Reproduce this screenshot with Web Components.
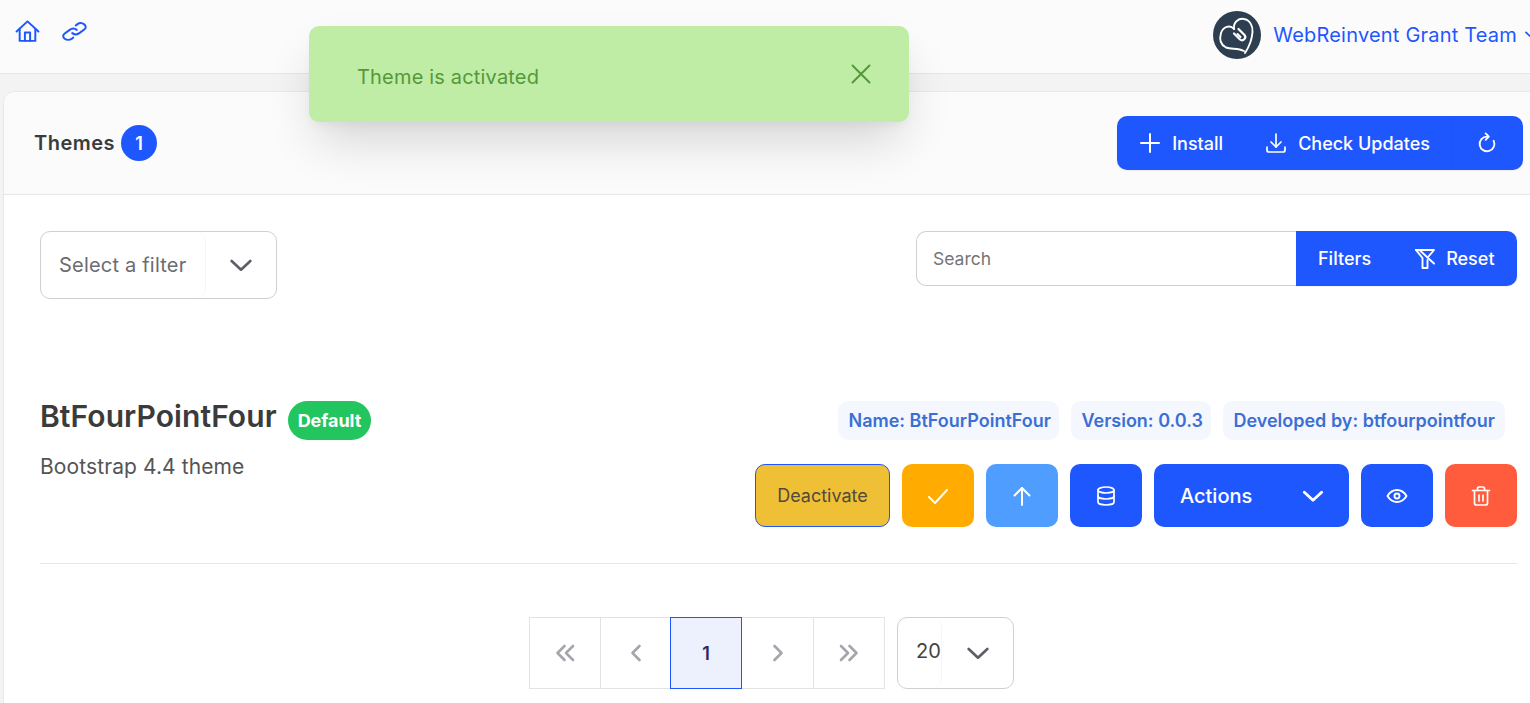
<!DOCTYPE html>
<html lang="en">
<head>
<meta charset="utf-8">
<title>Themes</title>
<style>
  html, body { margin: 0; height: 703px; overflow: hidden; background: #f3f3f3; }
  body { font-family: 'Inter', 'Liberation Sans', sans-serif; }
</style>
</head>
<body>
<app-shell>
  <top-bar slot="top" user="WebReinvent Grant Team"></top-bar>
  <toast-note slot="toast">Theme is activated</toast-note>
  <themes-card count="1">
    <filter-bar slot="filters"></filter-bar>
    <theme-row slot="rows" name="BtFourPointFour" description="Bootstrap 4.4 theme" version="0.0.3" developer="btfourpointfour"></theme-row>
    <page-nav slot="pager" current="1" per-page="20"></page-nav>
  </themes-card>
</app-shell>

<script>
const ICONS = {
  home: '<path d="M1.500 12L12 2.300 22.500 12"/><path d="M4.500 9.800V21h15V9.800"/><path d="M9.500 21v-8h5v8"/>',
  link: '<g transform="translate(12 12) scale(1.2 .88) translate(-12 -12)"><path vector-effect="non-scaling-stroke" d="M13.828 10.172a4 4 0 00-5.656 0l-4 4a4 4 0 105.656 5.656l1.102-1.101"/><path vector-effect="non-scaling-stroke" d="M10.172 13.828a4 4 0 005.656 0l4-4a4 4 0 00-5.656-5.656l-1.1 1.1"/></g>',
  plus: '<path d="M12 3v18M3 12h18"/>',
  download: '<path d="M3 16v3a2 2 0 0 0 2 2h14a2 2 0 0 0 2-2v-3"/><path d="M7 11l5 5 5-5"/><path d="M12 3v13"/>',
  refresh: '<path d="M12 5a8 8 0 1 0 7.200 4.500"/><path d="M10.500 1.500L14 5l-3.500 3.500"/>',
  filteroff: '<path d="M3 3h18l-5.500 6.500"/><path d="M3 3l6.500 8v10h5v-8"/><path d="M7 3.500l14 13"/>',
  chevron: '<path d="M4 8.500l8 7.500 8-7.500"/>',
  check: '<path d="M3 13l6 6L21 6"/>',
  up: '<path d="M12 21V4"/><path d="M4.500 11.500L12 4l7.500 7.500"/>',
  database: '<ellipse cx="12" cy="6" rx="8" ry="3"/><path d="M4 6v6c0 1.700 3.600 3 8 3s8-1.300 8-3V6"/><path d="M4 12v6c0 1.700 3.600 3 8 3s8-1.300 8-3v-6"/>',
  eye: '<circle cx="12" cy="12" r="2.500"/><path d="M21.500 12c-2.400 4-5.600 6-9.500 6s-7.100-2-9.500-6c2.400-4 5.600-6 9.500-6s7.100 2 9.500 6z"/>',
  trash: '<path d="M3.500 6.500h17"/><path d="M5.500 6.500V19a2 2 0 0 0 2 2h9a2 2 0 0 0 2-2V6.500"/><path d="M8.500 6.500V4.500a1.500 1.500 0 0 1 1.500-1.500h4a1.500 1.500 0 0 1 1.500 1.500v2"/><path d="M10 11v6M14 11v6"/>',
  close: '<path d="M3.500 3.500l17 17M20.500 3.500l-17 17"/>',
  first: '<path d="M11.500 5l-7 7 7 7M20 5l-7 7 7 7"/>',
  prev: '<path d="M15.500 5l-7 7 7 7"/>',
  next: '<path d="M8.500 5l7 7-7 7"/>',
  last: '<path d="M4 5l7 7-7 7M12.500 5l7 7-7 7"/>'
};

class UiIcon extends HTMLElement {
  constructor() {
    super();
    const size = this.getAttribute('size') || 24;
    const stroke = this.getAttribute('stroke') || 2;
    this.attachShadow({ mode: 'open' });
    this.shadowRoot.innerHTML = `
      <style>
        :host { display: inline-flex; flex: none; width: ${size}px; height: ${size}px; }
        svg { width: 100%; height: 100%; fill: none; stroke: currentColor; stroke-width: ${stroke}; stroke-linecap: round; stroke-linejoin: round; }
      </style>
      <svg viewBox="0 0 24 24">${ICONS[this.getAttribute('name')] || ''}</svg>`;
  }
}
customElements.define('ui-icon', UiIcon);

const shellTemplate = document.createElement('template');
shellTemplate.innerHTML = `
  <style>
    :host { display: block; position: relative; width: 1554px; }
    main { padding: 17px 0 0 3px; }
  </style>
  <slot name="top"></slot>
  <slot name="toast"></slot>
  <main><slot></slot></main>
`;
class AppShell extends HTMLElement {
  constructor() {
    super();
    this.attachShadow({ mode: 'open' });
    this.shadowRoot.appendChild(shellTemplate.content.cloneNode(true));
  }
}
customElements.define('app-shell', AppShell);

class TopBar extends HTMLElement {
  constructor() {
    super();
    this.attachShadow({ mode: 'open' });
    this.shadowRoot.innerHTML = `
      <style>
        :host { display: flex; align-items: flex-start; justify-content: space-between; box-sizing: border-box; height: 74px; background: #fbfbfb; border-bottom: 1px solid #e6e6e6; padding: 11px 13px 0 15px; color: #1f57ff; }
        nav { display: flex; gap: 22px; padding-top: 8px; }
        .user { display: flex; align-items: center; gap: 12px; height: 48px; font-size: 20px; line-height: 48px; letter-spacing: .2px; }
        .user span { display: block; }
        .user ui-icon { margin-left: -6px; }
        .avatar { width: 48px; height: 48px; flex: none; }
      </style>
      <nav>
        <ui-icon name="home" size="25" stroke="1.900"></ui-icon>
        <ui-icon name="link" size="25" stroke="2"></ui-icon>
      </nav>
      <div class="user">
        <svg class="avatar" viewBox="0 0 48 48" fill="none" stroke="#fff" stroke-linecap="round">
          <circle cx="24" cy="24" r="24" fill="#2c3e50" stroke="none"/>
          <path stroke-width="1.900" d="M21 18C17 13 10 16 8 22c-2 7 0 12 5 14.500 5 2 12 .5 18 3.500"/>
          <path stroke-width="1.900" d="M21 18c-1-7 5-11 10-10 6 1 9 7 8.500 13-.5 7-3.500 15-7.500 21"/>
          <path stroke-width="2.200" d="M21 22.500l6 6a3.200 3.200 0 0 0 4.500-4.500l-6-6"/>
          <path stroke-width="2" d="M24.500 23l3 3"/>
        </svg>
        <span>${this.getAttribute('user')}</span>
        <ui-icon name="chevron" size="18" stroke="2.400"></ui-icon>
      </div>`;
  }
}
customElements.define('top-bar', TopBar);

const toastTemplate = document.createElement('template');
toastTemplate.innerHTML = `
  <style>
    :host { position: absolute; left: 309px; top: 26px; width: 600px; height: 96px; box-sizing: border-box; display: flex; align-items: center; justify-content: space-between; padding: 6px 36px 0 48px; background: #c0eda6; color: #55983a; border-radius: 10px; font-size: 20px; letter-spacing: .18px; box-shadow: 0 25px 50px -8px rgba(0, 0, 0, .16), 0 6px 12px -4px rgba(0, 0, 0, .05); z-index: 5; }
    ui-icon { margin-bottom: 6px; }
  </style>
  <slot></slot>
  <ui-icon name="close" size="24" stroke="2"></ui-icon>
`;
class ToastNote extends HTMLElement {
  constructor() {
    super();
    this.attachShadow({ mode: 'open' });
    this.shadowRoot.appendChild(toastTemplate.content.cloneNode(true));
  }
}
customElements.define('toast-note', ToastNote);

class ThemesCard extends HTMLElement {
  constructor() {
    super();
    this.attachShadow({ mode: 'open' });
    this.shadowRoot.innerHTML = `
      <style>
        :host { display: block; background: #fff; border: 1px solid #e8e8e8; border-radius: 12px 12px 0 0; }
        header { display: flex; align-items: center; justify-content: space-between; height: 102px; padding: 0 30px; background: #fbfbfb; border-bottom: 1px solid #e6e6e6; border-radius: 12px 12px 0 0; }
        .title { display: flex; align-items: center; gap: 6px; font-size: 20px; font-weight: 600; color: #3b3b3b; letter-spacing: .5px; }
        .count { width: 36px; height: 36px; border-radius: 50%; background: #1f57ff; color: #fff; font-size: 18px; font-weight: 600; letter-spacing: 0; display: grid; place-items: center; }
        .group { display: flex; height: 54px; border-radius: 10px; overflow: hidden; background: #1f57ff; color: #fff; font-size: 18px; font-weight: 500; box-shadow: 0 1px 2px rgba(0,0,0,.06); }
        .group div { display: flex; align-items: center; gap: 10px; box-shadow: inset -1px 0 rgba(0,0,0,.015); }
        .install { padding: 0 20px 0 21px; }
        .updates { padding: 0 22px 0 21px; }
        .reload { padding: 0 25px 0 24px; }
        section { padding: 36px 36px 40px; }
      </style>
      <header>
        <div class="title"><span>Themes</span><span class="count">${this.getAttribute('count')}</span></div>
        <div class="group">
          <div class="install"><ui-icon name="plus" size="24"></ui-icon><span>Install</span></div>
          <div class="updates"><ui-icon name="download" size="24" stroke="1.700"></ui-icon><span>Check Updates</span></div>
          <div class="reload"><ui-icon name="refresh" size="22"></ui-icon></div>
        </div>
      </header>
      <section>
        <slot name="filters"></slot>
        <slot name="rows"></slot>
        <slot name="pager"></slot>
      </section>`;
  }
}
customElements.define('themes-card', ThemesCard);

class FilterBar extends HTMLElement {
  constructor() {
    super();
    this.attachShadow({ mode: 'open' });
    this.shadowRoot.innerHTML = `
      <style>
        :host { display: flex; justify-content: space-between; align-items: flex-start; }
        .select { display: flex; width: 237px; height: 68px; box-sizing: border-box; border: 1px solid #d0d0d0; border-radius: 10px; color: #6b6b72; font-size: 20px; letter-spacing: .2px; }
        .select .value { width: 165px; box-sizing: border-box; padding-left: 18px; display: flex; align-items: center; border-right: 1px solid #f5f5f5; border-radius: 0 10px 10px 0; }
        .select .arrow { flex: 1; display: grid; place-items: center; color: #5e5e68; }
        .search { display: flex; height: 55px; width: 601px; }
        .field { width: 380px; box-sizing: border-box; border: 1px solid #d0d0d0; border-right: 0; border-radius: 10px 0 0 10px; padding-left: 16px; display: flex; align-items: center; color: #757575; font-size: 17.500px; }
        .btns { flex: 1; display: flex; align-items: center; background: #1f57ff; color: #fff; font-size: 18px; font-weight: 500; border-radius: 0 10px 10px 0; padding-left: 22px; box-shadow: 0 1px 2px rgba(0,0,0,.06); }
        .btns ui-icon { margin-left: 42px; margin-right: 9px; }
      </style>
      <div class="select">
        <div class="value">Select a filter</div>
        <div class="arrow"><ui-icon name="chevron" size="28" stroke="2.300"></ui-icon></div>
      </div>
      <div class="search">
        <div class="field">Search</div>
        <div class="btns"><span>Filters</span><ui-icon name="filteroff" size="24" stroke="1.900"></ui-icon><span>Reset</span></div>
      </div>`;
  }
}
customElements.define('filter-bar', FilterBar);

class IconBtn extends HTMLElement {
  constructor() {
    super();
    this.attachShadow({ mode: 'open' });
    this.shadowRoot.innerHTML = `
      <style>
        :host { display: grid; place-items: center; width: 72px; height: 63px; border-radius: 10px; color: #fff; background: ${this.getAttribute('color')}; }
      </style>
      <ui-icon name="${this.getAttribute('icon')}" size="${this.getAttribute('size') || 24}" stroke="${this.getAttribute('stroke') || 2}"></ui-icon>`;
  }
}
customElements.define('icon-btn', IconBtn);

class TagPill extends HTMLElement {
  constructor() {
    super();
    this.attachShadow({ mode: 'open' });
    this.shadowRoot.innerHTML = `
      <style>
        :host { display: block; height: 39px; line-height: 39px; padding: 0 10px; border-radius: 10px; background: #f4f7fe; color: #3b6fd4; font-size: 18px; font-weight: 600; }
      </style>
      <slot></slot>`;
  }
}
customElements.define('tag-pill', TagPill);

class ThemeRow extends HTMLElement {
  constructor() {
    super();
    this.attachShadow({ mode: 'open' });
    this.shadowRoot.innerHTML = `
      <style>
        :host { display: flex; justify-content: space-between; margin-top: 102px; padding-bottom: 36px; border-bottom: 1px solid #e6e6e6; }
        .head { display: flex; align-items: flex-start; gap: 11px; height: 39px; }
        h2 { margin: 0; font-size: 30px; line-height: 31px; font-weight: 600; color: #3b3b3b; letter-spacing: .07px; }
        .badge { height: 39px; line-height: 39px; padding: 0 10px; border-radius: 20px; background: #22c55e; color: #fff; font-size: 18px; font-weight: 700; letter-spacing: -.05px; }
        p { margin: 14px 0 0; font-size: 21px; line-height: 26px; letter-spacing: .1px; color: #555; }
        .side { display: flex; flex-direction: column; align-items: flex-end; gap: 24px; }
        .tags { display: flex; gap: 12px; padding-right: 12px; }
        .tags tag-pill:nth-child(-n+2) { padding-right: 8.500px; }
        .actions { display: flex; gap: 12px; }
        .deactivate { display: grid; place-items: center; width: 135px; height: 63px; box-sizing: border-box; background: #efc035; border: 1px solid #1f57ff; border-radius: 10px; color: #524a3c; font-size: 18px; }
        .menu { display: flex; align-items: center; justify-content: space-between; width: 195px; height: 63px; box-sizing: border-box; padding: 0 23px 0 26px; background: #1f57ff; color: #fff; border-radius: 10px; font-size: 20px; font-weight: 500; }
      </style>
      <div>
        <div class="head"><h2>${this.getAttribute('name')}</h2><span class="badge">Default</span></div>
        <p>${this.getAttribute('description')}</p>
      </div>
      <div class="side">
        <div class="tags">
          <tag-pill>Name: ${this.getAttribute('name')}</tag-pill>
          <tag-pill>Version: ${this.getAttribute('version')}</tag-pill>
          <tag-pill>Developed by: ${this.getAttribute('developer')}</tag-pill>
        </div>
        <div class="actions">
          <div class="deactivate">Deactivate</div>
          <icon-btn color="#ffab00" icon="check"></icon-btn>
          <icon-btn color="#4f9dff" icon="up"></icon-btn>
          <icon-btn color="#1f57ff" icon="database" stroke="1.700"></icon-btn>
          <div class="menu"><span>Actions</span><ui-icon name="chevron" size="26" stroke="2.600"></ui-icon></div>
          <icon-btn color="#1f57ff" icon="eye" stroke="1.900"></icon-btn>
          <icon-btn color="#ff5c3d" icon="trash" stroke="1.700"></icon-btn>
        </div>
      </div>`;
  }
}
customElements.define('theme-row', ThemeRow);

class PageNav extends HTMLElement {
  constructor() {
    super();
    this.attachShadow({ mode: 'open' });
    this.shadowRoot.innerHTML = `
      <style>
        :host { display: flex; gap: 12px; margin-top: 53px; padding-left: 489px; }
        .cells { display: flex; }
        .cell { width: 72px; height: 72px; box-sizing: border-box; display: grid; place-items: center; border: 1px solid #e3e3e3; margin-left: -1px; color: #a5a5ad; }
        .cell:first-child { margin-left: 0; }
        .cell.slim { width: 71px; }
        .cell.after { border-left: 0; margin-left: 0; }
        .cell.on { z-index: 1; background: #ecf1fd; border-color: #1f57ff; color: #2a2a5a; font-size: 18px; font-weight: 600; }
        .size { display: flex; width: 117px; height: 72px; box-sizing: border-box; border: 1px solid #d0d0d0; border-radius: 10px; color: #444; font-size: 20px; }
        .size .value { width: 44px; box-sizing: border-box; padding: 0 0 4px 18px; display: flex; align-items: center; border-right: 1px solid #f5f5f5; border-radius: 0 10px 10px 0; }
        .size .arrow { flex: 1; display: grid; place-items: center; color: #5e5e68; }
      </style>
      <div class="cells">
        <div class="cell"><ui-icon name="first" size="24" stroke="2.600"></ui-icon></div>
        <div class="cell slim"><ui-icon name="prev" size="24" stroke="2.600"></ui-icon></div>
        <div class="cell on">${this.getAttribute('current')}</div>
        <div class="cell after"><ui-icon name="next" size="24" stroke="2.600"></ui-icon></div>
        <div class="cell"><ui-icon name="last" size="24" stroke="2.600"></ui-icon></div>
      </div>
      <div class="size">
        <div class="value">${this.getAttribute('per-page')}</div>
        <div class="arrow"><ui-icon name="chevron" size="28" stroke="2.300"></ui-icon></div>
      </div>`;
  }
}
customElements.define('page-nav', PageNav);
</script>
</body>
</html>
